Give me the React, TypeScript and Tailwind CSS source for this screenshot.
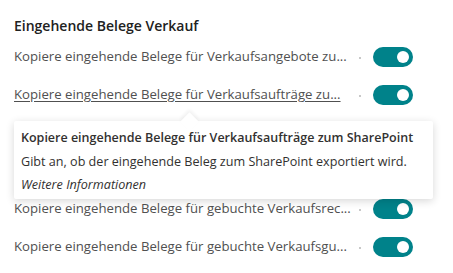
import React from 'react';

const ROWS_TOP = [
  { label: 'Kopiere eingehende Belege für Verkaufsangebote zu...', link: false },
  { label: 'Kopiere eingehende Belege für Verkaufsaufträge zu...', link: true },
];

const ROWS_BOTTOM = [
  { label: 'Kopiere eingehende Belege für gebuchte Verkaufsrec...', link: false },
  { label: 'Kopiere eingehende Belege für gebuchte Verkaufsgu...', link: false },
];

function Toggle() {
  return (
    <div className="w-[40px] h-[20px] rounded-full bg-[#00828a] flex items-center justify-end pr-[4px]">
      <div className="w-[12px] h-[12px] rounded-full bg-white" />
    </div>
  );
}

function Row({ label, link }: { label: string; link: boolean }) {
  return (
    <div className="h-[38px] flex items-center">
      <span
        className={`w-[336px] text-[13.2px] text-[#505050] whitespace-nowrap ${
          link ? 'underline underline-offset-2' : ''
        }`}
      >
        {label}
      </span>
      <span className="w-[2px] h-[2px] bg-[#c8c8c8] ml-[9px] mt-[2px]" />
      <div className="ml-[12px]">
        <Toggle />
      </div>
    </div>
  );
}

export default function App() {
  return (
    <div
      className="relative w-[453px] h-[273px] bg-white overflow-hidden px-[14px]"
      style={{ fontFamily: '"Open Sans", "Noto Sans", sans-serif' }}
    >
      <div className="h-[38px] flex items-center pt-[12px]">
        <h2 className="text-[14px] font-semibold text-[#212121]">Eingehende Belege Verkauf</h2>
      </div>

      {ROWS_TOP.map((r, i) => (
        <Row key={i} {...r} />
      ))}
      {/* rows hidden under the tooltip */}
      <div className="h-[76px]" />
      {ROWS_BOTTOM.map((r, i) => (
        <Row key={i} {...r} />
      ))}

      {/* Tooltip */}
      <div className="absolute left-[14px] top-[121px] w-[419px] h-[78px] bg-white rounded-[2px] shadow-[0_2px_8px_rgba(0,0,0,0.16)] px-[7px] pt-[8px]">
        <div className="absolute -top-[6px] left-[169px] w-[13px] h-[13px] bg-white rotate-45 shadow-[-2px_-2px_4px_rgba(0,0,0,0.06)]" />
        <div className="relative">
          <p className="text-[12.5px] font-semibold text-[#323130] leading-[18px] whitespace-nowrap">
            Kopiere eingehende Belege für Verkaufsaufträge zum SharePoint
          </p>
          <p className="text-[12.6px] text-[#323130] leading-[18px] mt-[6px] whitespace-nowrap">
            Gibt an, ob der eingehende Beleg zum SharePoint exportiert wird.
          </p>
          <p className="text-[12.6px] italic text-[#323130] leading-[18px] mt-[5px]">Weitere Informationen</p>
        </div>
      </div>
    </div>
  );
}
